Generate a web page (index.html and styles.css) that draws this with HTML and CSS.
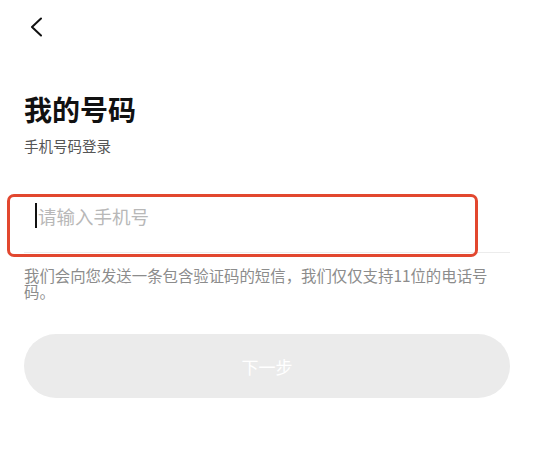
FILE: index.html
```html
<!DOCTYPE html>
<html lang="zh-CN">
<head>
  <meta charset="UTF-8">
  <meta name="viewport" content="width=device-width, initial-scale=1.0">
  <title>我的号码</title>
  <link rel="stylesheet" href="styles.css">
</head>
<body>
  <div class="page">
    <div class="topbar">
      <button class="back" aria-label="返回">
        <svg width="12" height="20" viewBox="0 0 12 20">
          <polyline points="11,1.5 2,10 11,18.5" fill="none" stroke="#111" stroke-width="2" stroke-linecap="round" stroke-linejoin="round"/>
        </svg>
      </button>
    </div>

    <h1 class="title">我的号码</h1>
    <p class="subtitle">手机号码登录</p>

    <div class="field">
      <div class="field-input">
        <span class="caret"></span>
        <span class="placeholder">请输入手机号</span>
      </div>
      <div class="highlight"></div>
    </div>

    <p class="hint">我们会向您发送一条包含验证码的短信，我们仅仅支持11位的电话号码。</p>

    <button class="next" disabled>下一步</button>
  </div>
</body>
</html>
```

FILE: styles.css
```css
body {
  margin: 0;
  background-color: #fff;
  font-family: "Noto Sans CJK SC", "Noto Sans", sans-serif;
  color: #111;
}
.page {
  padding: 0 23px 0 24px;
}
.topbar {
  padding-top: 17px;
  height: 20px;
}
.back {
  background: none;
  border: none;
  padding: 0;
  margin-left: 6px;
  display: block;
  cursor: pointer;
}
.back svg {
  display: block;
}
.title {
  margin: 54px 0 0;
  font-size: 28px;
  line-height: 36px;
  font-weight: bold;
}
.subtitle {
  margin: 9px 0 0;
  font-size: 14.5px;
  line-height: 20px;
  color: #555;
}
.field {
  position: relative;
  margin-top: 40px;
}
.field-input {
  height: 55px;
  padding: 7px 0 0 11px;
  box-sizing: border-box;
  height: 57px;
  border-bottom: 1px solid #ececec;
  display: flex;
  align-items: flex-start;
}
.caret {
  width: 2px;
  height: 25px;
  background-color: #111;
}
.placeholder {
  margin-left: 1px;
  font-size: 18.5px;
  line-height: 26px;
  color: #b8b8b8;
}
.highlight {
  position: absolute;
  left: -17px;
  top: -2px;
  right: 32px;
  bottom: -4px;
  border: 3px solid #e2472f;
  border-radius: 7px;
}
.hint {
  margin: 14px 0 0;
  padding-right: 16px;
  font-size: 15.4px;
  line-height: 16px;
  color: #8c8c8c;
}
.next {
  display: block;
  width: 100%;
  height: 64px;
  margin-top: 35px;
  border: none;
  border-radius: 32px;
  background-color: #ebebeb;
  color: #fff;
  font-family: inherit;
  font-size: 17px;
}
```
